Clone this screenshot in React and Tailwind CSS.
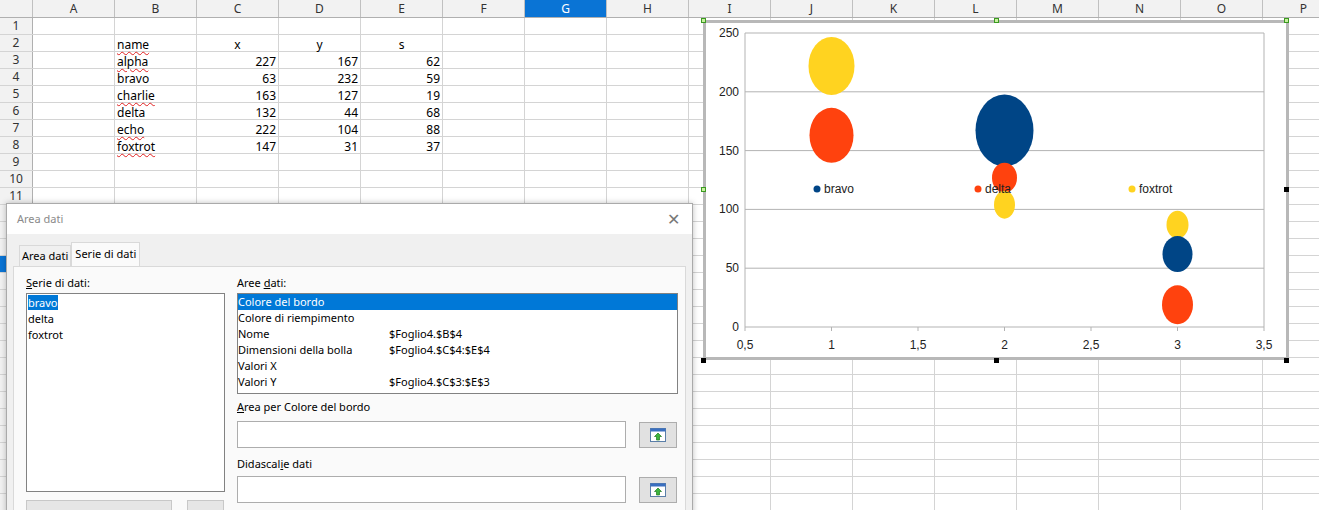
import React from "react";

const cols = ["A","B","C","D","E","F","G","H","I","J","K","L","M","N","O","P"];
const data = {
  2: ["", "name", "x", "y", "s"],
  3: ["", "alpha", "227", "167", "62"],
  4: ["", "bravo", "63", "232", "59"],
  5: ["", "charlie", "163", "127", "19"],
  6: ["", "delta", "132", "44", "68"],
  7: ["", "echo", "222", "104", "88"],
  8: ["", "foxtrot", "147", "31", "37"],
};
const wavy = new Set(["name","alpha","charlie","echo","foxtrot"]);

function Sheet() {
  const rows = Array.from({ length: 29 }, (_, i) => i + 1);
  return (
    <div className="font-['Liberation_Sans',sans-serif] text-[12px] text-black">
      <div className="flex h-[18px] bg-[#f2f2f2] border-b border-[#b0b0b0]">
        <div className="w-[33px] shrink-0 border-r border-[#c0c0c0]" />
        {cols.map((c) => (
          <div key={c} className={`w-[82px] shrink-0 flex items-center justify-center border-r border-[#c0c0c0] ${c === "G" ? "bg-[#0a74d5] text-white" : "text-[#333]"}`}>{c}</div>
        ))}
      </div>
      {rows.map((r) => (
        <div key={r} className="flex h-[17px] border-b border-[#d4d4d4]">
          <div className={`w-[33px] shrink-0 flex items-center justify-center border-r border-[#b0b0b0] ${r === 15 ? "bg-[#0a74d5] text-white" : "bg-[#f2f2f2] text-[#333]"}`}>{r}</div>
          {cols.map((c, ci) => {
            const v = data[r]?.[ci] ?? "";
            const num = /^\d+$/.test(v);
            const hdr = r === 2 && ci >= 2;
            return (
              <div key={c} className={`w-[82px] shrink-0 border-r border-[#d4d4d4] px-[2px] pt-[3px] flex items-center leading-none ${num ? "justify-end" : hdr ? "justify-center" : ""}`}>
                {v && (wavy.has(v) ? <span className="underline decoration-wavy decoration-[#e02020] decoration-1 underline-offset-2">{v}</span> : <span>{v}</span>)}
              </div>
            );
          })}
        </div>
      ))}
    </div>
  );
}

function Chart() {
  const X = (v) => 745 + (v - 0.5) * 173 - 703;
  const Y = (v) => 327 - v * 1.176 - 20;
  const bubbles = [
    [1, 222, 23, 29, "#ffd320"],
    [1, 163, 22, 27.5, "#ff420e"],
    [2, 167, 29, 36, "#004586"],
    [2, 127, 12.5, 15, "#ff420e"],
    [2, 104, 10.5, 14, "#ffd320"],
    [3, 87, 11, 14, "#ffd320"],
    [3, 62, 15, 18, "#004586"],
    [3, 19, 15.5, 19.5, "#ff420e"],
  ];
  return (
    <div className="absolute left-[703px] top-[20px] w-[586px] h-[340px] bg-white border-[3px] border-[#b8b8b8]">
      <svg width="580" height="334" className="absolute -left-[3px] -top-[3px] overflow-visible" style={{ fontFamily: "Liberation Sans, sans-serif" }}>
        {[0, 50, 100, 150, 200, 250].map((v) => (
          <g key={v}>
            <line x1={X(0.5)} x2={X(3.5)} y1={Y(v)} y2={Y(v)} stroke="#b3b3b3" />
            <text x={X(0.5) - 6} y={Y(v) + 4} fontSize="12" textAnchor="end" fill="#222">{v}</text>
          </g>
        ))}
        <line x1={X(3.5)} x2={X(3.5)} y1={Y(250)} y2={Y(0)} stroke="#b3b3b3" />
        <line x1={X(0.5)} x2={X(0.5)} y1={Y(250)} y2={Y(0)} stroke="#b3b3b3" />
        {[0.5, 1, 1.5, 2, 2.5, 3, 3.5].map((v) => (
          <g key={v}>
            <line x1={X(v)} x2={X(v)} y1={Y(0)} y2={Y(0) + 4} stroke="#b3b3b3" />
            <text x={X(v)} y={Y(0) + 22} fontSize="12" textAnchor="middle" fill="#222">{String(v).replace(".", ",")}</text>
          </g>
        ))}
        {bubbles.map(([x, y, rx, ry, c], i) => (
          <ellipse key={i} cx={X(x)} cy={Y(y)} rx={rx} ry={ry} fill={c} />
        ))}
        {[[114, "#004586", "bravo"], [275, "#ff420e", "delta"], [429, "#ffd320", "foxtrot"]].map(([x, c, t]) => (
          <g key={t}>
            <circle cx={x} cy={169} r={3.5} fill={c} />
            <text x={x + 7} y={173} fontSize="12" fill="#222">{t}</text>
          </g>
        ))}
      </svg>
      {[[-3,-3],[290,-3],[580,-3],[-3,166],[580,166]].map(([l,t],i)=>(
        <div key={i} className="absolute w-[5px] h-[5px] border border-[#3a9a20] bg-[#c8f0a0]" style={{left:l-2,top:t-2}} />
      ))}
      {[[-3,337],[290,337],[580,337],[580,166]].map(([l,t],i)=>(
        <div key={"b"+i} className="absolute w-[5px] h-[5px] bg-black" style={{left:l-2,top:t-2}} />
      ))}
    </div>
  );
}

function PickBtn() {
  return (
    <div className="w-[38px] h-[26px] bg-[#e1e1e1] border border-[#adadad] flex items-center justify-center">
      <svg width="18" height="16" viewBox="0 0 18 16">
        <rect x="1.5" y="1.5" width="15" height="13" fill="#fff" stroke="#5a7ea8" />
        <rect x="1.5" y="1.5" width="15" height="3" fill="#3a6fc0" />
        <path d="M9 6 L5.5 9.5 H7.5 V13 H10.5 V9.5 H12.5 Z" fill="#3cb53c" stroke="#1e7a1e" strokeWidth="0.7" />
      </svg>
    </div>
  );
}

function Dialog() {
  const rows = [
    ["Colore del bordo", ""],
    ["Colore di riempimento", ""],
    ["Nome", "$Foglio4.$B$4"],
    ["Dimensioni della bolla", "$Foglio4.$C$4:$E$4"],
    ["Valori X", ""],
    ["Valori Y", "$Foglio4.$C$3:$E$3"],
  ];
  return (
    <div className="absolute left-[6px] top-[203px] w-[687px] h-[320px] bg-[#f0f0f0] border border-[#aaa] shadow-[0_0_6px_rgba(0,0,0,0.25)] font-['Noto_Sans',sans-serif] text-[11px] text-black">
      <div className="h-[30px] bg-white flex items-center justify-between px-[10px]">
        <span className="text-[#8a8a8a]">Area dati</span>
        <span className="text-[#777] text-[16px] font-light mr-[2px]">✕</span>
      </div>
      <div className="px-[6px] pt-[8px]">
        <div className="flex items-end h-[24px]">
          <div className="ml-[6px] h-[21px] px-[2px] border border-b-0 border-[#d9d9d9] bg-[#f0f0f0] flex items-center">Area dati</div>
          <div className="h-[24px] px-[3px] border border-b-0 border-[#d9d9d9] bg-[#fafafa] flex items-center">Serie di dati</div>
        </div>
        <div className="h-[260px] border border-[#d9d9d9] bg-[#fafafa] flex gap-[12px] pl-[12px] pt-[8px]">
          <div className="w-[199px] flex flex-col">
            <div className="h-[18px]"><span className="underline">S</span>erie di dati:</div>
            <div className="h-[199px] border border-[#828282] bg-white px-[1px] pt-[1px] leading-[16px]">
              <div><span className="bg-[#0078d7] text-white">bravo</span></div>
              <div>delta</div>
              <div>foxtrot</div>
            </div>
            <div className="flex gap-[15px] mt-[8px]">
              <div className="w-[146px] h-[20px] border border-[#c8c8c8] bg-[#e6e6e6]" />
              <div className="w-[37px] h-[20px] border border-[#c8c8c8] bg-[#e6e6e6]" />
            </div>
          </div>
          <div className="w-[441px] flex flex-col">
            <div className="h-[18px]">Aree <span className="underline">d</span>ati:</div>
            <div className="h-[101px] border border-[#828282] bg-white leading-[16px]">
              {rows.map(([a, b], i) => (
                <div key={a} className={`flex ${i === 0 ? "bg-[#0078d7] text-white" : ""}`}>
                  <span className="w-[151px]">{a}</span>
                  <span>{b}</span>
                </div>
              ))}
            </div>
            <div className="mt-[5px] h-[22px]"><span className="underline">A</span>rea per Colore del bordo</div>
            <div className="flex gap-[13px] items-center">
              <div className="w-[389px] h-[27px] border border-[#adadad] bg-white" />
              <PickBtn />
            </div>
            <div className="mt-[5px] h-[22px] flex items-center">Didascal<span className="underline">i</span>e dati</div>
            <div className="flex gap-[13px] items-center mt-[1px]">
              <div className="w-[389px] h-[27px] border border-[#adadad] bg-white" />
              <PickBtn />
            </div>
          </div>
        </div>
      </div>
    </div>
  );
}

export default function App() {
  return (
    <div className="relative w-[1319px] h-[510px] overflow-hidden bg-white">
      <Sheet />
      <Chart />
      <Dialog />
    </div>
  );
}
